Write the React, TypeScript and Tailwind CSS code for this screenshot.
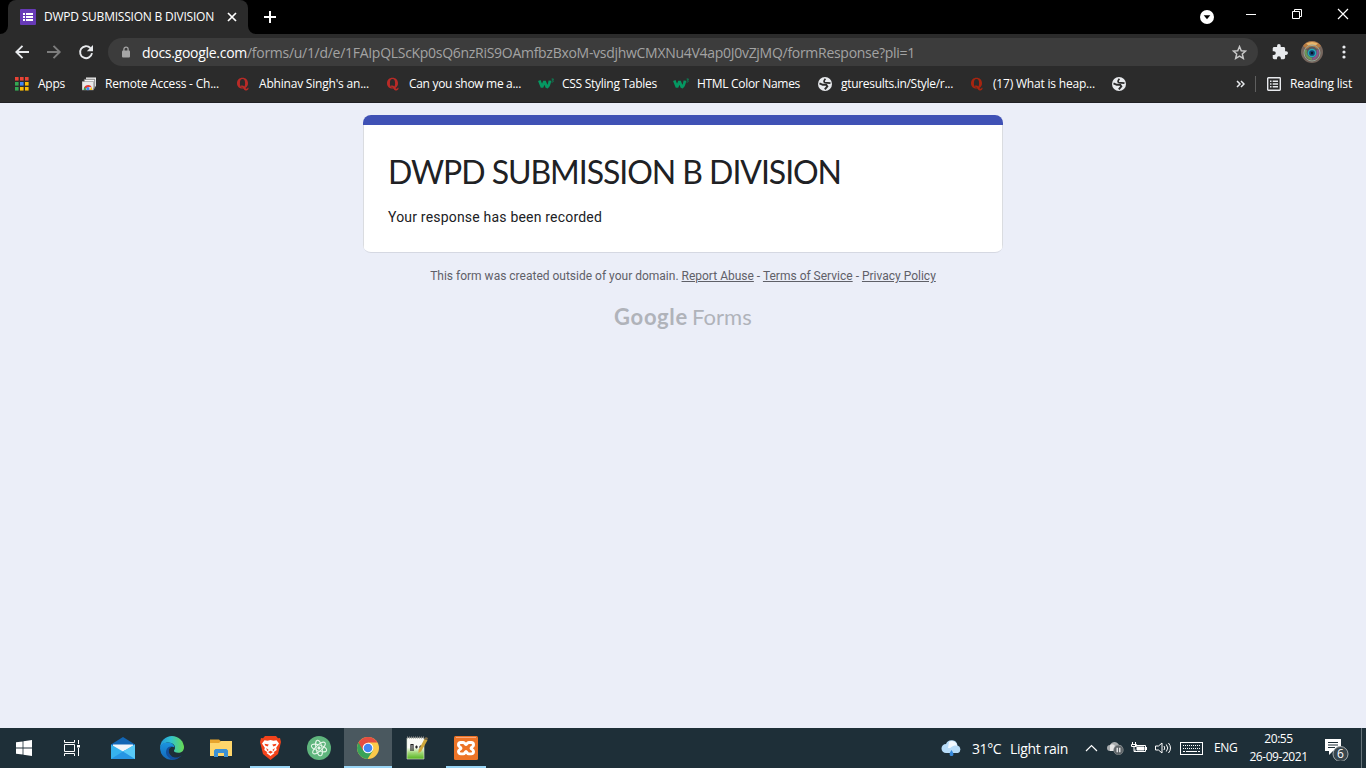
import React from "react";

const UI = "font-['Open_Sans','Noto_Sans',sans-serif] whitespace-nowrap";

function QuoraIcon({ color = "#b92b27" }: { color?: string }) {
  return (
    <svg width="14" height="14" viewBox="0 0 14 14" fill={color}>
      <path fillRule="evenodd" d="M6.500.8C9.700.8 12 3 12 6.200S9.700 11.600 6.500 11.600 1 9.400 1 6.200 3.300.8 6.500.8zM6.500 1.900C4.700 1.900 3.900 3.400 3.900 6.200s.8 4.300 2.600 4.300 2.600-1.500 2.600-4.300-.8-4.300-2.600-4.300z" />
      <path d="M4.300 8.900c2.800-1.200 4.300.2 5.200 2 .7 1.300 1.900 1.200 2.100-.2h1c.1 3.600-3.600 3.600-4.800 1.300C6.900 10.300 6 9.500 4.600 9.800z" />
    </svg>
  );
}

function W3Icon() {
  return (
    <svg width="17" height="14" viewBox="0 0 17 14" fill="none" stroke="#059862">
      <path d="M1.300 3.600 4 10.300 6.500 4.200 8.900 10.300Q11.200 8.900 11.900 3.600" strokeWidth="2.700" strokeLinejoin="bevel" />
      <path d="M13.600 2h1.900l-1.100 1.300c1.700.2 1.200 2.100-1 1.700" strokeWidth=".8" />
    </svg>
  );
}

function GlobeIcon() {
  return (
    <svg width="14" height="14" viewBox="0 0 14 14">
      <circle cx="7" cy="7" r="7" fill="#e8eaed" />
      <path d="M1.500 6.300 4.800 7.800H8.200L9.300 9.400 6.800 12.300" fill="none" stroke="#2b2b2b" strokeWidth="1.900" />
      <path d="M7.400 1.700C6 3.300 5.700 4.500 6.500 5.300c1 .8 3.100.3 6 .8" fill="none" stroke="#2b2b2b" strokeWidth="1.700" />
    </svg>
  );
}

function AppsIcon() {
  const colors = ["#ea4335", "#ea4335", "#ea4335", "#34a853", "#4285f4", "#fbbc05", "#34a853", "#fbbc05", "#fbbc05"];
  return (
    <svg width="14" height="14" viewBox="0 0 14 14">
      {colors.map((c, i) => (
        <rect key={i} x={(i % 3) * 5} y={Math.floor(i / 3) * 5} width="3.600" height="3.600" fill={c} />
      ))}
    </svg>
  );
}

function RemoteIcon() {
  return (
    <svg width="15" height="14" viewBox="0 0 15 14">
      <path d="M4 .500h10v9H4z" fill="#eee" />
      <path d="M2.200 2.300h10.500v9H2.200z" fill="#f5f5f5" stroke="#6b6b6b" strokeWidth=".8" />
      <path d="M0 4.500h11.500V13H0z" fill="#e9e9e9" stroke="#8c8c8c" strokeWidth=".6" />
      <path d="M2 13a4.200 4.200 0 0 1 7.800-2.800L6 10z" fill="#e33b2e" />
      <path d="M1.800 13a4 4 0 0 1 .7-3l2 3z" fill="#2da94f" />
      <path d="M9.700 10c.5 1 .5 2 .3 3H7.300z" fill="#fbc116" />
      <circle cx="5.900" cy="11.700" r="1.600" fill="#4285f4" />
    </svg>
  );
}

function TabBar() {
  return (
    <div className="flex h-[34px] bg-black">
      <div className="flex w-2 items-end overflow-hidden">
        <svg width="8" height="8"><path d="M8 0v8H0a8 8 0 0 0 8-8z" fill="#2b2b2b" /></svg>
      </div>
      <div className="flex w-[240px] items-center rounded-t-lg bg-[#2b2b2b] pl-3">
        <svg width="16" height="16" viewBox="0 0 16 16">
          <rect width="16" height="16" rx="1" fill="#673ab7" />
          <path d="M3 4h2v2H3zM3 7h2v2H3zM3 10h2v2H3zM6 4h7v2H6zM6 7h7v2H6zM6 10h7v2H6z" fill="#fff" />
        </svg>
        <div className={`${UI} ml-2 w-[182px] text-[12px] text-white tracking-[-0.223px]`}>DWPD SUBMISSION B DIVISION</div>
        <svg width="10" height="10" viewBox="0 0 10 10" stroke="#fff" strokeWidth="1.700" className="ml-[1px]"><path d="m1 1 8 8M9 1 1 9" /></svg>
      </div>
      <div className="flex w-2 items-end">
        <svg width="8" height="8"><path d="M0 0v8h8a8 8 0 0 1-8-8z" fill="#2b2b2b" /></svg>
      </div>
      <div className="flex flex-1 items-center pl-2">
        <svg width="12" height="12" viewBox="0 0 12 12" stroke="#fff" strokeWidth="2"><path d="M6 0v12M0 6h12" /></svg>
      </div>
      <div className="flex h-[34px] items-center">
        <svg width="14" height="14" viewBox="0 0 14 14" className="mr-8"><circle cx="7" cy="7" r="7" fill="#fff" /><path d="M3.700 5.200h6.600L7 9.300z" fill="#000" /></svg>
      </div>
      <div className="flex h-[28px] w-[120px] items-center">
        <svg width="120" height="12" viewBox="0 0 120 12" fill="none" stroke="#fff">
          <path d="M0 6.500h10" />
          <path d="M46.500 3.500h7v7h-7zM48.500 3.500v-2h7v7h-2" />
          <path d="m92 1 10 10M102 1l-10 10" strokeWidth="1.200" />
        </svg>
      </div>
    </div>
  );
}

function Toolbar() {
  return (
    <div className="flex h-9 items-center bg-[#2b2b2b] pl-[15px]">
      <svg width="79" height="16" viewBox="0 0 79 16" fill="none" strokeWidth="1.900">
        <path d="M14 8H1.500M7.500 1.800 1.300 8l6.200 6.200" stroke="#e8eaed" />
        <path d="M32 8h12.500M38.500 1.800 44.700 8l-6.200 6.200" stroke="#7d7d7d" />
        <path d="M75.400 4A6 6 0 1 0 77 9.200" stroke="#e8eaed" />
        <path d="M78 1v6.200h-6.200z" fill="#e8eaed" />
      </svg>
      <div className="ml-[14px] flex h-7 w-[1150px] items-center rounded-full bg-[#3c3c3c] pl-[14px]">
        <svg width="8" height="12" viewBox="0 0 8 12"><rect y="4.500" width="8" height="7" rx="1" fill="#a6a6a6" /><path d="M1.900 5V3.200a2.100 2.100 0 0 1 4.200 0V5" fill="none" stroke="#a6a6a6" strokeWidth="1.300" /></svg>
        <div className={`${UI} ml-3 w-[105px] text-[14px] text-white tracking-[-0.284px]`}>docs.google.com</div>
        <div className={`${UI} w-[668px] text-[14px] text-[#a3a3a3] tracking-[-0.287px]`}>/forms/u/1/d/e/1FAIpQLScKp0sQ6nzRiS9OAmfbzBxoM-vsdjhwCMXNu4V4ap0J0vZjMQ/formResponse?pli=1</div>
        <svg width="15" height="15" viewBox="0 0 24 24" fill="none" stroke="#c8c8c8" strokeWidth="2.400" className="ml-auto mr-[11px]"><path d="m12 2.500 2.800 6.600 7 .6-5.300 4.700 1.600 7L12 17.700l-6.100 3.700 1.600-7-5.300-4.700 7-.6z" /></svg>
      </div>
      <svg width="16" height="16" viewBox="1.500 1 21 22" className="ml-[14px]"><path fill="#e8eaed" d="M20.500 11H19V7c0-1.100-.9-2-2-2h-4V3.500a2.500 2.500 0 0 0-5 0V5H4c-1.100 0-2 .9-2 2v3.800h1.500a2.700 2.700 0 0 1 0 5.400H2V20c0 1.100.9 2 2 2h3.800v-1.500a2.700 2.700 0 0 1 5.400 0V22H17c1.100 0 2-.9 2-2v-4h1.500a2.500 2.500 0 0 0 0-5z" /></svg>
      <svg width="22" height="22" viewBox="0 0 22 22" className="ml-[13px]">
        <circle cx="11" cy="11" r="11" fill="#76665d" />
        <path d="M2 5a11 11 0 0 1 18 0l-4 3H6z" fill="#b97b40" /><path d="M5 2.500Q11-.5 17 2.500L14 5H8z" fill="#e8b66c" />
        <circle cx="11" cy="12" r="8" fill="none" stroke="#91a297" strokeWidth="1" />
        <circle cx="11" cy="12" r="6.500" fill="#575b60" /><path d="M5 9a7 7 0 0 0 6 9" fill="none" stroke="#6b9b57" strokeWidth="2" /><path d="M16.500 9a7 7 0 0 1-5 9" fill="none" stroke="#8a5490" strokeWidth="2" />
        <circle cx="11" cy="12" r="3.600" fill="#123f70" stroke="#22aab9" strokeWidth="1.500" /><circle cx="11" cy="12" r="1.200" fill="#071325" />
      </svg>
      <svg width="4" height="14" viewBox="0 0 4 14" className="ml-[19px]" fill="#e8eaed"><circle cx="2" cy="2" r="1.600" /><circle cx="2" cy="7" r="1.600" /><circle cx="2" cy="12" r="1.600" /></svg>
    </div>
  );
}

function Bookmarks() {
  const t = `${UI} text-[12px] text-white`;
  return (
    <div className="flex h-[33px] items-center border-b border-[#202024] bg-[#2b2b2b] pb-[4px] pl-[15px]">
      <div className="flex w-[67px] items-center"><AppsIcon /><div className={`${t} ml-[9px] tracking-[-0.249px]`}>Apps</div></div>
      <div className="flex w-[154px] items-center"><RemoteIcon /><div className={`${t} ml-[8px] tracking-[-0.207px]`}>Remote Access - Ch...</div></div>
      <div className="flex w-[150px] items-center"><QuoraIcon /><div className={`${t} ml-[9px] tracking-[-0.203px]`}>Abhinav Singh's an...</div></div>
      <div className="flex w-[152px] items-center"><QuoraIcon /><div className={`${t} ml-[9px] tracking-[-0.311px]`}>Can you show me a...</div></div>
      <div className="flex w-[135px] items-center"><W3Icon /><div className={`${t} ml-[7px] tracking-[-0.27px]`}>CSS Styling Tables</div></div>
      <div className="flex w-[145px] items-center"><W3Icon /><div className={`${t} ml-[7px] tracking-[-0.31px]`}>HTML Color Names</div></div>
      <div className="flex w-[152px] items-center"><GlobeIcon /><div className={`${t} ml-[9px] tracking-[-0.302px]`}>gturesults.in/Style/r...</div></div>
      <div className="flex w-[142px] items-center"><QuoraIcon color="#a82510" /><div className={`${t} ml-[9px] tracking-[-0.193px]`}>(17) What is heap...</div></div>
      <GlobeIcon />
      <svg width="9" height="8" viewBox="0 0 9 8" fill="none" stroke="#e8eaed" strokeWidth="1.500" className="ml-[110px]"><path d="m1 1 3 3-3 3M5 1l3 3-3 3" /></svg>
      <div className="ml-[10px] h-4 w-px bg-[#5f5f5f]" />
      <svg width="14" height="14" viewBox="0 0 14 14" className="ml-[11px]" fill="none" stroke="#e8eaed" strokeWidth="1.400"><rect x=".7" y=".7" width="12.600" height="12.600" rx=".7" /><path d="M3 4.200h1.500M3 7h1.500M3 9.800h1.500M5.700 4.200H11M5.700 7H11M5.700 9.800H11" /></svg>
      <div className={`${t} ml-[9px] tracking-[-0.187px]`}>Reading list</div>
    </div>
  );
}

function FormPage() {
  return (
    <main className="flex h-[625px] flex-col items-center bg-[#ebeef8] pt-3">
      <section className="h-[138px] w-[640px] overflow-hidden rounded-lg border-b border-[#d5d8e2] bg-white">
        <div className="h-[10px] bg-[#3f51b5]" />
        <div className="h-[127px] border-x border-[#dadce0] px-6">
          <h1 className="pt-[27px] font-['Lato',sans-serif] text-[32px] leading-[40px] tracking-[-1.047px] whitespace-nowrap text-[#202124]">DWPD SUBMISSION B DIVISION</h1>
          <p className="pt-[15px] font-['Roboto',sans-serif] text-[14px] leading-5 tracking-[0.195px] text-[#202124]">Your response has been recorded</p>
        </div>
      </section>
      <p className="mt-[15px] font-['Roboto',sans-serif] text-[12px] leading-4 whitespace-nowrap text-[#5f6068]">
        This form was created outside of your domain. <span className="underline">Report Abuse</span> - <span className="underline">Terms of Service</span> - <span className="underline">Privacy Policy</span>
      </p>
      <div className="mt-[17px] flex gap-[4px] font-['Lato',sans-serif] text-[22px] leading-8 text-[#b0b3ba]">
        <span className="font-bold tracking-[0.65px]">Google</span><span className="tracking-[0.08px]">Forms</span>
      </div>
    </main>
  );
}

function TaskButton({ children, active, running }: { children: React.ReactNode; active?: boolean; running?: boolean }) {
  return (
    <div className="flex h-10 w-[49px] justify-end">
      <div className={`flex h-10 w-12 flex-col items-center ${active ? "bg-[#4a585f]" : ""}`}>
        <div className="flex h-[38px] items-center pt-[2px]">{children}</div>
        <div className={`h-[2px] ${active ? "w-full bg-[#99d5f5]" : running ? "w-10 bg-[#99d5f5]" : "w-0"}`} />
      </div>
    </div>
  );
}

function Taskbar() {
  return (
    <div className="flex h-10 items-center bg-[#1e2f38] text-white">
      <div className="flex w-12 justify-center"><svg width="16" height="16" viewBox="0 0 16 16" fill="#fff"><path d="M0 2.300 6.600 1.400v6.200H0zM7.400 1.300 16 0v7.600H7.400zM0 8.400h6.600v6.200L0 13.700zM7.400 8.400H16V16l-8.600-1.200z" /></svg></div>
      <div className="flex w-[50px] justify-center pr-[2px]"><svg width="16" height="16" viewBox="0 0 16 16" fill="none" stroke="#fff"><path d="M.500 0v2.500h10V0M.500 4.500h10v7H.500zM.500 16v-2.500h10V16M14.500 0v4M14.500 8v8" /><path d="M13 5h3v2.500h-3z" fill="#fff" stroke="none" /></svg></div>
      <TaskButton><svg width="24" height="22" viewBox="0 0 24 22"><path d="M0 7.500 12 0l12 7.500V13H0z" fill="#1266b5" /><path d="M2 7.500h20V15H2z" fill="#f2f6fa" /><path d="M0 7.500l12 7 12-7V22H0z" fill="#36b2ee" /><path d="M0 22 13.500 13.600 24 22z" fill="#2795e3" /><path d="M24 7.500V22L12 14.500z" fill="#58c9f6" /></svg></TaskButton>
      <TaskButton>
        <svg width="24" height="24" viewBox="0 0 24 24">
          <defs>
            <linearGradient id="edge-top" x1="0" x2="1"><stop stopColor="#2397dc" /><stop offset=".45" stopColor="#31c2cf" /><stop offset="1" stopColor="#68db50" /></linearGradient>
            <linearGradient id="edge-low" x1="0" x2="0" y2="1"><stop stopColor="#1a94e0" /><stop offset="1" stopColor="#1467b8" /></linearGradient>
            <clipPath id="edge-clip"><circle cx="12" cy="12" r="12" /></clipPath>
          </defs>
          <g clipPath="url(#edge-clip)">
            <path d="M0 0h24v11.500c0 3.500-2.700 5.300-5.700 5.300-3.200 0-4.800-1-4.300-2.200 3.100-3.700-.8-8-5.700-8C4.300 6.600 1 9 0 12z" fill="url(#edge-top)" />
            <path d="M0 12c1-4 4-5.500 8.300-5.400 3.300 0 6 2.200 6.200 4.900-2.800-2-7 .5-6 5 1 4 4.800 6 9.500 5.500C10 26 0 24 0 12z" fill="url(#edge-low)" />
            <path d="M12.500 10.700c-3.900.4-4.800 4.800-2.300 8 2.800 3.600 7.300 4 12 .2l-1 3-6 2c-7-.5-10-5.400-9-9.500.8-3 3.500-4.600 6.300-3.700z" fill="#124f9d" />
          </g>
          <path d="M13.500 14.800c-.4 3 5 4.700 9.200 1.700.5-.2.800.1.600.6-.5 1-1 1.800-1.700 2.300-4.400 1.400-9.300-1.500-8.100-4.600z" fill="#1e2f38" />
        </svg>
      </TaskButton>
      <TaskButton><svg width="22" height="20" viewBox="0 0 22 20"><path d="M0 1.500h9l2 2h11V18H0z" fill="#e8a52d" /><path d="M0 5h9l2-2h11v15H0z" fill="#ffd66b" /><path d="M4 19v-6.500l1.500-1.500h11l1.500 1.500V19h-4v-4H8v4z" fill="#3c91d5" /></svg></TaskButton>
      <TaskButton running>
        <svg width="21" height="24" viewBox="0 0 21 24"><path d="M5 0h11l2 2.300 2-.2L21 6l-3 12-7.500 6L3 18 0 6l1-3.900 2 .2z" fill="#f3431b" /><path d="m4.500 4.200 3 .6 3-.7 3 .7 3-.6L19 7.500l-2.800 4.200.5 2.300-3.200 2.300 1 .7-4 3-4-3 1-.7L4.300 14l.5-2.300L2 7.500z" fill="#fff" /><path d="m4.500 7.700 4.300.8-1.300 2-2.300-1zM16.500 7.700l-4.300.8 1.300 2 2.300-1zM6.200 12l2.500 2-1.500 1zM14.800 12l-2.500 2 1.500 1zM8 16l2.500-1.200L13 16l-2.500 1.700z" fill="#f3431b" /></svg>
      </TaskButton>
      <TaskButton><svg width="24" height="24" viewBox="0 0 24 24" fill="none" stroke="#e5f6e9"><circle cx="12" cy="12" r="12" fill="#5fb57d" stroke="none" /><ellipse cx="12" cy="12" rx="3" ry="8" transform="rotate(-12 12 12)" /><ellipse cx="12" cy="12" rx="3" ry="8" transform="rotate(48 12 12)" /><ellipse cx="12" cy="12" rx="3" ry="8" transform="rotate(108 12 12)" /><circle cx="12" cy="12" r="1.200" fill="#fff" /></svg></TaskButton>
      <TaskButton active><svg width="22" height="22" viewBox="0 0 22 22"><circle cx="11" cy="11" r="11" fill="#fbc94a" /><path d="M1.500 5.500a11 11 0 0 0 9 16.500l5.300-8.300L11 11z" fill="#39a258" /><path d="M1.500 5.500a11 11 0 0 1 19 0H11L6.200 13.700z" fill="#e34d42" /><circle cx="11" cy="11" r="5.300" fill="#fff" /><circle cx="11" cy="11" r="4.300" fill="#4285f4" /></svg></TaskButton>
      <TaskButton>
        <svg width="22" height="24" viewBox="0 0 22 24"><defs><linearGradient id="note" x2="0" y2="1"><stop offset=".45" stopColor="#fafbf7" /><stop offset=".7" stopColor="#a2d879" /><stop offset="1" stopColor="#54b41e" /></linearGradient></defs><path d="M1 2h17v21H1z" fill="url(#note)" stroke="#dde5d7" strokeWidth=".6" /><path d="M1 1.500h17" stroke="#8d8d8d" strokeWidth="2" strokeDasharray="1 1" /><path d="M5 8v7M4.500 8.500H7V15M9 11h3M10.500 9.500v3M13 11h3M14.500 9.500v3" stroke="#222" strokeWidth="1.200" fill="none" /><path d="m18.500 3 3 1.300-6.400 11.200-2.700 1.400.2-3.100z" fill="#cda63a" /><path d="m18.500 3 1.200-2L22 2.100l-.8 2.100z" fill="#806d48" /></svg>
      </TaskButton>
      <TaskButton running>
        <svg width="24" height="24" viewBox="0 0 24 24"><rect width="24" height="24" rx="1.500" fill="#ed7427" /><path d="M6.800 6.500h2.400c1.600 0 2.100 2 2.800 2s1.200-2 2.800-2h2.400A2.300 2.300 0 0 1 19.500 8.800v.4c0 1.500-2.500 2-2.500 3s2.500 1.500 2.500 3v.4a2.300 2.300 0 0 1-2.300 2.300h-2.400c-1.600 0-2.100-2.400-2.800-2.400s-1.200 2.400-2.800 2.400H6.800a2.300 2.300 0 0 1-2.300-2.300v-.4c0-1.500 2.500-2 2.500-3s-2.500-1.500-2.500-3v-.4a2.300 2.300 0 0 1 2.300-2.300z" fill="none" stroke="#fff" strokeWidth="2.900" strokeLinejoin="round" /><path d="M2 1.500h20" stroke="#f8a67a" /></svg>
      </TaskButton>
      <svg width="22" height="17" viewBox="0 0 22 17" className="ml-[451px]"><path d="M5 13a4.500 4.500 0 0 1 0-9 6 6 0 0 1 11.500 1.500A4 4 0 0 1 17 13z" fill="#b7dcf8" /><path d="M8 2a5 5 0 0 1 8 4c-5-2-5 3-9 2z" fill="#f2f9ff" /><path d="M10.500 10c-3 4-2 6 0 6s3-2 0-6z" fill="#3689dc" /></svg>
      <div className={`${UI} ml-[9px] w-[38px] text-[14px] tracking-[-0.4px]`}>31°C</div>
      <div className={`${UI} w-[58px] text-[14px] tracking-[-0.328px]`}>Light rain</div>
      <svg width="13" height="8" viewBox="0 0 13 8" fill="none" stroke="#fff" strokeWidth="1.200" className="ml-[17px]"><path d="m1 7 5.500-5.500L12 7" /></svg>
      <svg width="17" height="14" viewBox="0 0 17 14" className="ml-[9px]"><path d="M3 10a3 3 0 0 1 0-6C5 0 10 0 12 4c3 0 4 2 3 6z" fill="#a9adaf" /><path d="M3 4c3-2 5 1 7 3l-4 3H3z" fill="#e5e5e5" /><circle cx="11.500" cy="9" r="4.800" fill="#5e6468" stroke="#8d9294" strokeWidth=".6" /><path d="M10.200 6.700v4.600M12.800 6.700v4.600" stroke="#fff" strokeWidth="1.200" /></svg>
      <svg width="16" height="12" viewBox="0 0 16 12" fill="none" stroke="#fff" className="ml-[7px]"><path d="M4 3.500h10.500v6H4v-2M1.500 0v2M4.500 0v2M.500 2.500h5v2H.500zM3 5v4.500h2M15.500 5v3" /><path d="M6 5h7v3H6z" fill="#fff" /></svg>
      <svg width="17" height="14" viewBox="0 0 17 14" fill="none" stroke="#fff" className="ml-[8px]"><path d="M.500 5h3L7 2v10L3.500 9h-3zM9 5q1.500 2 0 4M11.300 3.500q3 3.500 0 7M13.500 2q4 5 0 10" /></svg>
      <svg width="23" height="13" viewBox="0 0 23 13" fill="none" stroke="#fff" className="ml-[8px]"><rect x=".5" y=".5" width="22" height="12" /><path d="M3 3.500h17M3 6.500h17" strokeDasharray="1 1" /><path d="M3 9.500h2M6 9.500h11M18 9.500h2" /></svg>
      <div className={`${UI} ml-[11px] w-[23px] text-[12px] tracking-[-0.4px]`}>ENG</div>
      <div className={`${UI} ml-[12px] flex w-[59px] flex-col items-center text-[12px] leading-[18px] tracking-[-0.45px]`}><span>20:55</span><span>26-09-2021</span></div>
      <svg width="26" height="26" viewBox="0 0 26 26" className="ml-[16px] font-['Open_Sans',sans-serif]"><path d="M1 4h16v12H9l-4 4v-4H1z" fill="#fff" /><path d="M4 7.500h10M4 10h10M4 12.500h7" stroke="#1e2f38" /><circle cx="16.500" cy="19" r="7.500" fill="#39464d" stroke="#a4abae" /><text x="16.500" y="23.200" textAnchor="middle" fontSize="12" fill="#fff">6</text></svg>
      <div className="ml-auto mr-[4px] h-10 w-px bg-[#66737a]" />
    </div>
  );
}

export default function App() {
  return <div className="h-[768px] w-[1366px] overflow-hidden"><TabBar /><Toolbar /><Bookmarks /><FormPage /><Taskbar /></div>;
}
